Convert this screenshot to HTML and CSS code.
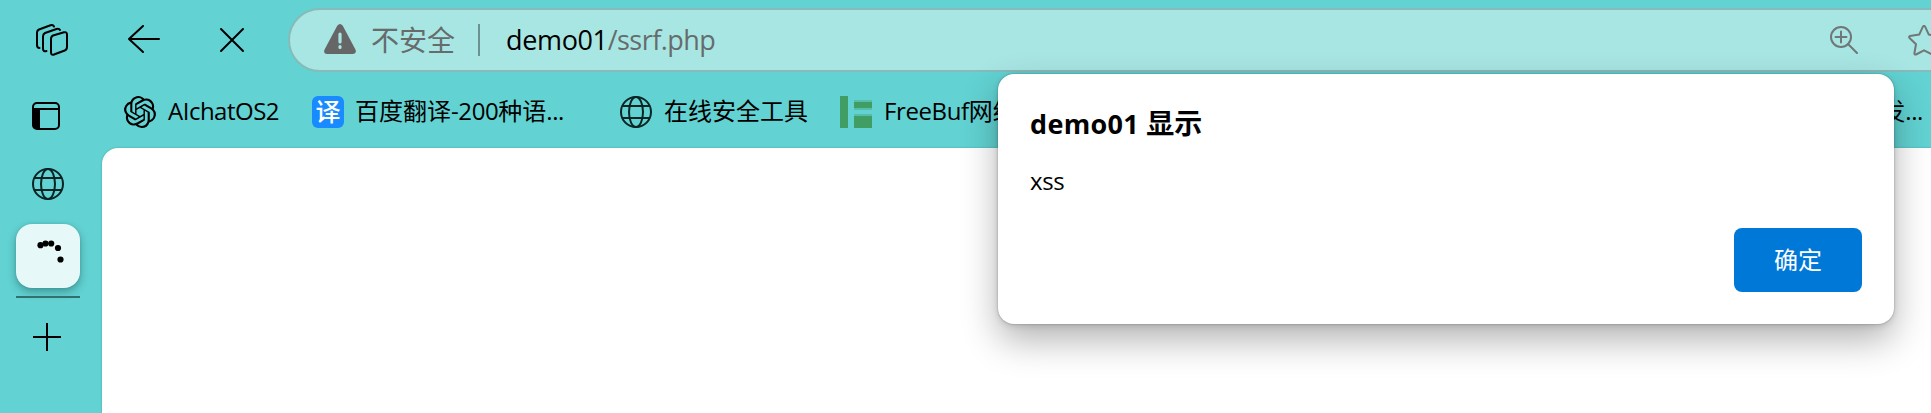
FILE: index.html
```html
<!DOCTYPE html>
<html lang="zh-CN">
<head>
<meta charset="utf-8">
<title>demo01/ssrf.php</title>
<link rel="stylesheet" href="styles.css">
</head>
<body>
<svg width="0" height="0" class="defs">
  <symbol id="globe" viewBox="0 0 32 32">
    <g fill="none" stroke="#0c2424" stroke-width="2"><circle cx="16" cy="16" r="15"/><ellipse cx="16" cy="16" rx="7" ry="15"/><path d="M2.5 10h27M2.5 22h27"/></g>
  </symbol>
</svg>
<header class="toolbar">
  <svg class="workspaces" width="32" height="32" viewBox="0 0 32 32" fill="none" stroke="#000" stroke-width="2" stroke-linejoin="round" stroke-linecap="round">
    <path d="M17 11.5L28 8.3Q31 7.5 31 10.500V23Q31 25.500 28.700 26.500L18 30.500Q15 31.500 15 28.500V15Q15 12.300 17 11.500Z"/>
    <path d="M10.500 27Q7 28 7 24.500V12.500Q7 10 9 9L20.500 5Q23 4.200 24 6"/>
    <path d="M3.500 24Q1 24 1 21V8.500Q1 6.500 3 5.500L14.500 1.300Q17 .5 18 2.500"/>
  </svg>
  <svg class="back" width="32" height="28" viewBox="0 0 32 28" fill="none" stroke="#000" stroke-width="2" stroke-linecap="round" stroke-linejoin="round"><path d="M31 14H1M15 1L1 14L15 27"/></svg>
  <svg class="stop" width="24" height="24" viewBox="0 0 24 24" fill="none" stroke="#000" stroke-width="2" stroke-linecap="round"><path d="M1 1L23 23M23 1L1 23"/></svg>
  <div class="address">
    <svg class="warning" width="32" height="30" viewBox="0 0 32 30"><path fill="#666" d="M13.200 1.700Q16-1.500 18.800 1.700L31.400 25.500Q33 29.500 29 30H3Q-1 29.500.6 25.500Z"/><path d="M16 10v8M16 22.500v1" stroke="#a8e6e3" stroke-width="3.200" stroke-linecap="round"/></svg>
    <span class="insecure">不安全</span>
    <span class="separator"></span>
    <span class="url"><span class="host">demo01</span><span class="path">/ssrf.php</span></span>
    <svg class="zoom" width="28" height="28" viewBox="0 0 28 28" fill="none" stroke="#707777" stroke-width="2" stroke-linecap="round"><circle cx="11" cy="11" r="10"/><path d="M18 18L27 27M11 5.500V16.500M5.500 11H16.500"/></svg>
    <svg class="star" width="32" height="31" viewBox="0 0 32 31" fill="none" stroke="#707777" stroke-width="2" stroke-linejoin="round"><path d="M14.900 1.700Q16 0 17.100 1.700L20.800 9.600L30 11Q31.500 11.700 30.500 13L24 19.200L25.600 28.200Q25.500 30 24 29.500L16 25.300L8 29.500Q6.500 30 6.400 28.200L8 19.200L1.500 13Q.5 11.700 2 11L11.200 9.600Z"/></svg>
  </div>
</header>
<div class="lower">
  <nav class="sidebar">
    <svg class="panel" width="28" height="28" viewBox="0 0 28 28"><rect x="1" y="1" width="26" height="26" rx="4" fill="none" stroke="#000" stroke-width="2"/><path d="M1 7h7v20H5q-4 0-4-4z"/><path d="M1 7h26" stroke="#000" stroke-width="2"/></svg>
    <svg class="tab-globe" width="32" height="32"><use href="#globe"/></svg>
    <div class="tab-active"><svg width="64" height="64" viewBox="0 0 64 64"><circle cx="24.500" cy="21.200" r="3.100"/><circle cx="29.500" cy="19.500" r="3.100"/><circle cx="35.200" cy="19.500" r="3.100"/><circle cx="42" cy="24" r="3.100"/><circle cx="44.500" cy="35.500" r="3.100"/></svg></div>
    <div class="divider"></div>
    <svg class="plus" width="28" height="28" viewBox="0 0 28 28" stroke="#000" stroke-width="2"><path d="M14 0V28M0 14H28"/></svg>
  </nav>
  <div class="main">
    <div class="bookmarks">
      <div class="bookmark ai">
        <svg width="32" height="32" viewBox="0 0 24 24"><path d="M22.2819 9.8211a5.9847 5.9847 0 0 0-.5157-4.9108 6.0462 6.0462 0 0 0-6.5098-2.9A6.0651 6.0651 0 0 0 4.9807 4.1818a5.9847 5.9847 0 0 0-3.9977 2.9 6.0462 6.0462 0 0 0 .7427 7.0966 5.98 5.98 0 0 0 .511 4.9107 6.051 6.051 0 0 0 6.5146 2.9001A5.9847 5.9847 0 0 0 13.2599 24a6.0557 6.0557 0 0 0 5.7718-4.2058 5.9894 5.9894 0 0 0 3.9977-2.9001 6.0557 6.0557 0 0 0-.7475-7.0729zm-9.022 12.6081a4.4755 4.4755 0 0 1-2.8764-1.0408l.1419-.0804 4.7783-2.7582a.7948.7948 0 0 0 .3927-.6813v-6.7369l2.02 1.1686a.071.071 0 0 1 .038.052v5.5826a4.504 4.504 0 0 1-4.4945 4.4944zm-9.6607-4.1254a4.4708 4.4708 0 0 1-.5346-3.0137l.142.0852 4.783 2.7582a.7712.7712 0 0 0 .7806 0l5.8428-3.3685v2.3324a.0804.0804 0 0 1-.0332.0615L9.74 19.9502a4.4992 4.4992 0 0 1-6.1408-1.6464zM2.3408 7.8956a4.485 4.485 0 0 1 2.3655-1.9728V11.6a.7664.7664 0 0 0 .3879.6765l5.8144 3.3543-2.0201 1.1685a.0757.0757 0 0 1-.071 0l-4.8303-2.7865A4.504 4.504 0 0 1 2.3408 7.872zm16.5963 3.8558L13.1038 8.364 15.1192 7.2a.0757.0757 0 0 1 .071 0l4.8303 2.7913a4.4944 4.4944 0 0 1-.6765 8.1042v-5.6772a.79.79 0 0 0-.407-.667zm2.0107-3.0231l-.142-.0852-4.7735-2.7818a.7759.7759 0 0 0-.7854 0L9.409 9.2297V6.8974a.0662.0662 0 0 1 .0284-.0615l4.8303-2.7866a4.4992 4.4992 0 0 1 6.6802 4.66zM8.3065 12.863l-2.02-1.1638a.0804.0804 0 0 1-.038-.0567V6.0742a4.4992 4.4992 0 0 1 7.3757-3.4537l-.142.0805L8.704 5.459a.7948.7948 0 0 0-.3927.6813zm1.0976-2.3654l2.602-1.4998 2.6069 1.4998v2.9994l-2.5974 1.4997-2.6067-1.4997Z"/></svg>
        <span>AIchatOS2</span>
      </div>
      <div class="bookmark fanyi"><i class="yi">译</i><span>百度翻译<b class="latin">-200</b>种语<b class="latin">...</b></span></div>
      <div class="bookmark tools"><svg width="32" height="32"><use href="#globe"/></svg><span>在线安全工具</span></div>
      <div class="bookmark freebuf"><svg width="32" height="32" viewBox="0 0 32 32" fill="#409e65"><path d="M0 0h8v32H0zM14 6h18v6H14zM14 20h18v12H14z"/><path d="M14 4h18v2H14zM14 12h18v2H14zM14 18h18v2H14z" opacity=".35"/></svg><span><b class="latin">FreeBuf</b>网络</span></div>
      <div class="bookmark last"><span>发<b class="latin">...</b></span></div>
    </div>
    <main class="page"></main>
  </div>
</div>
<section class="dialog" role="dialog">
  <h1><span>demo01</span> 显示</h1>
  <p>xss</p>
  <button>确定</button>
</section>
</body>
</html>
```
FILE: styles.css
```css
* { box-sizing: border-box; }
body {
  margin: 0;
  width: 1931px;
  height: 413px;
  overflow: hidden;
  position: relative;
  display: flex;
  flex-direction: column;
  background: #62d2d2;
  color: #000;
  font-family: "Open Sans", "Noto Sans CJK SC", sans-serif;
}
svg { display: block; flex: none; }
.defs { position: absolute; }
.toolbar { height: 80px; display: flex; align-items: flex-start; padding-left: 36px; }
.workspaces { margin-top: 24px; }
.back { margin: 25px 0 0 60px; }
.stop { margin: 28px 0 0 60px; }
.address {
  flex: none;
  width: 1700px;
  height: 64px;
  margin: 8px 0 0 44px;
  padding-left: 34px;
  display: flex;
  align-items: center;
  border: 2px solid #87bab9;
  border-radius: 32px;
  background: #a8e6e3;
  font-size: 27px;
  line-height: 40px;
  white-space: nowrap;
}
.warning { margin-top: -2px; }
.insecure { width: 84px; margin: -1px 0 0 15px; font-size: 28px; font-weight: 400; color: #666c6c; }
.separator { width: 2px; height: 32px; margin-left: 23px; background: #6b9190; }
.url { width: 1319px; margin-left: 26px; }
.host { letter-spacing: -0.35px; }
.path { color: #666c6c; letter-spacing: -0.55px; }
.zoom { margin-left: 5px; }
.star { margin-left: 50px; }
.lower { flex: 1; display: flex; }
.sidebar { width: 102px; padding-left: 16px; display: flex; flex-direction: column; align-items: flex-start; }
.panel { margin: 22px 0 0 16px; }
.tab-globe { margin: 38px 0 0 16px; }
.tab-active {
  width: 64px;
  height: 64px;
  margin-top: 24px;
  border-radius: 16px;
  background: #e6f8f7;
  box-shadow: 0 4px 9px rgba(0, 50, 50, .35), 0 0 3px rgba(0, 50, 50, .15);
}
.divider { width: 64px; height: 2px; margin-top: 8px; background: #327070; }
.plus { margin: 25px 0 0 17px; }
.main { flex: 1; display: flex; flex-direction: column; }
.bookmarks {
  height: 68px;
  padding: 16px 8px 0 22px;
  display: flex;
  align-items: flex-start;
  font-size: 24px;
  line-height: 30px;
  white-space: nowrap;
}
.bookmark { flex: none; height: 32px; display: flex; align-items: flex-start; gap: 12px; }
.ai { width: 188px; letter-spacing: -0.5px; }
.fanyi { width: 308px; gap: 11px; }
.tools { width: 220px; }
.latin { font-weight: inherit; letter-spacing: -0.4px; }
.yi {
  width: 32px;
  height: 32px;
  border-radius: 6px;
  background: #178bff;
  color: #fff;
  font-style: normal;
  font-weight: 500;
  font-size: 25px;
  line-height: 30px;
  text-align: center;
}
.last { margin-left: auto; }
.page { flex: 1; background: #fff; border-radius: 16px 0 0 0; box-shadow: 0 0 2px rgba(0, 60, 60, .3); }
.dialog {
  position: absolute;
  left: 998px;
  top: 74px;
  width: 896px;
  height: 250px;
  padding: 29px 32px 32px;
  display: flex;
  flex-direction: column;
  border-radius: 16px;
  background: #fff;
  box-shadow: 0 0 2px rgba(0, 0, 0, .3), 0 2px 6px rgba(0, 0, 0, .12), 0 16px 36px rgba(0, 0, 0, .3);
}
.dialog h1 { margin: 0; font-size: 28px; line-height: 40px; font-weight: 700; }
.dialog h1 span { font-size: 27px; letter-spacing: 0.3px; }
.dialog p { margin: 21px 0 0; font-size: 24px; line-height: 32px; letter-spacing: -0.4px; }
.dialog button {
  width: 128px;
  height: 64px;
  margin: auto 0 0;
  padding: 0 0 3px;
  align-self: flex-end;
  border: 0;
  border-radius: 8px;
  background: #0078d7;
  color: #fff;
  font: 24px/32px "Noto Sans CJK SC", sans-serif;
}
```
